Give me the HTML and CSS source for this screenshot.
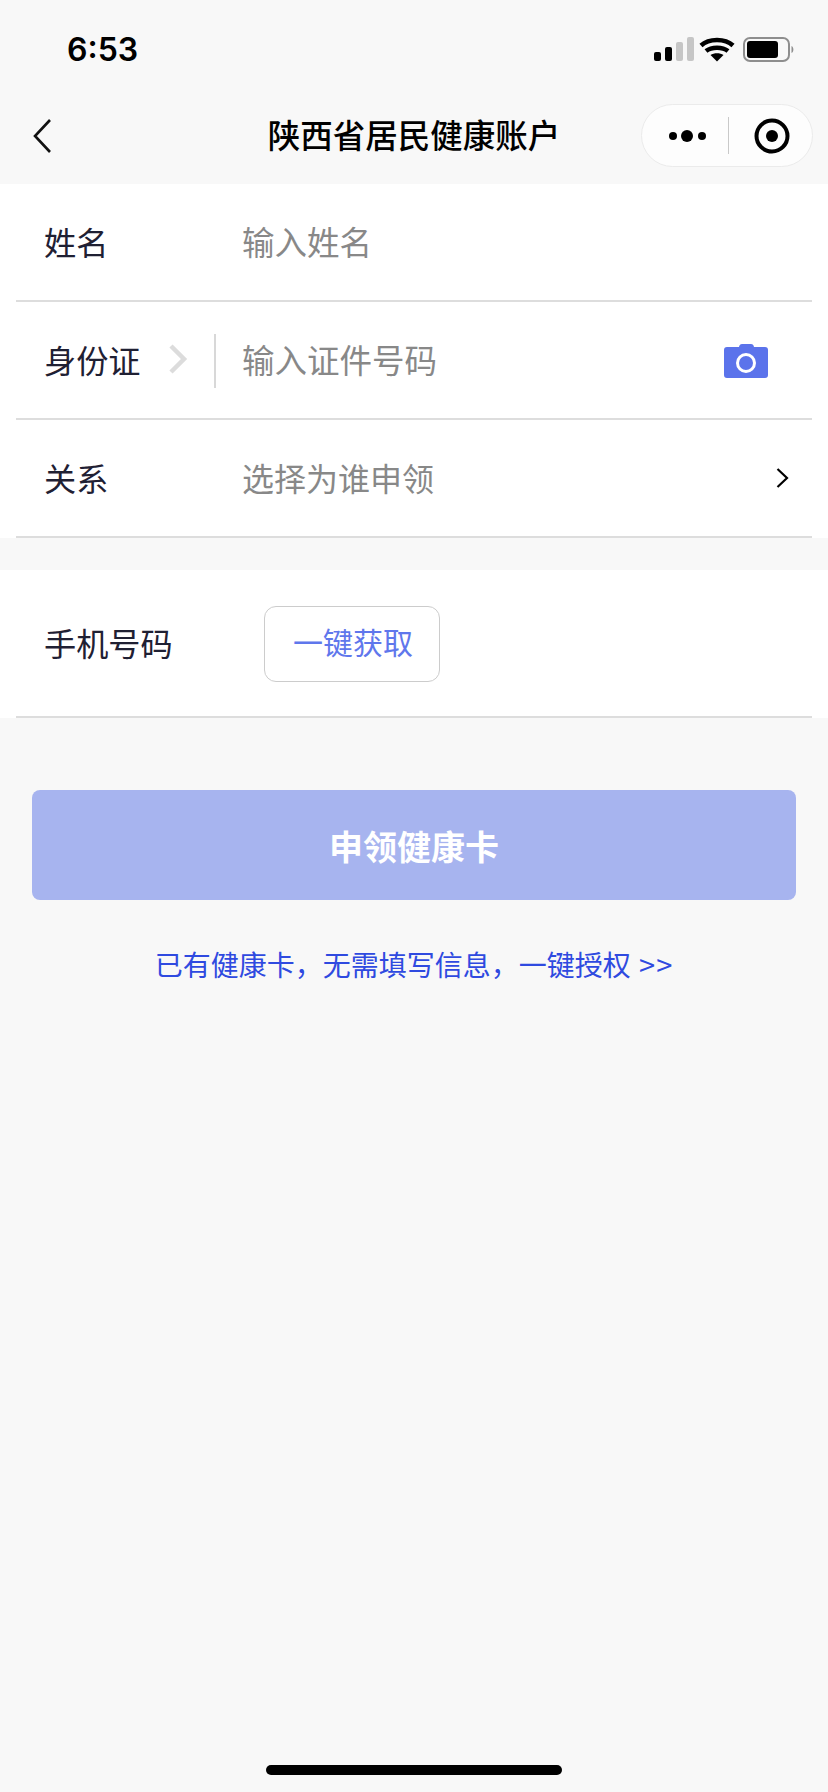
FILE: index.html
```html
<!DOCTYPE html>
<html lang="zh-CN">
    <head>
        <meta charset="utf-8">
        <meta name="viewport" content="width=device-width, initial-scale=1" />
        <title>陕西省居民健康账户</title>
        <link rel="stylesheet" href="styles.css">
    </head>
    <body>
        <div class="status-bar">
            <span class="time">6:53</span>
            <svg class="status-icons" width="142" height="26" viewBox="0 0 142 26">
                <rect x="1" y="15" width="7" height="9" rx="2" fill="#000"/>
                <rect x="12" y="10" width="7" height="14" rx="2" fill="#000"/>
                <rect x="23" y="5" width="7" height="19" rx="2" fill="#c6c6c6"/>
                <rect x="34" y="0" width="7" height="24" rx="2" fill="#c6c6c6"/>
                <path d="M48 8.5 C56 1 72 1 80 8.5 M53 14 C58.500 9.500 69.500 9.500 75 14" fill="none" stroke="#000" stroke-width="4.500"/>
                <path d="M57.500 18 C61 15.500 67 15.500 70.500 18 L64 24.500 Z" fill="#000"/>
                <rect x="91" y="1" width="45" height="23" rx="6" fill="none" stroke="#8e8e8e" stroke-width="2"/>
                <rect x="94" y="4" width="31" height="17" rx="3" fill="#000"/>
                <path d="M138.500 9 C141 10 141 15 138.500 16 Z" fill="#8e8e8e"/>
            </svg>
        </div>
        <div class="nav-bar">
            <svg class="nav-back" width="20" height="36" viewBox="0 0 20 36">
                <path d="M18 2 L3 18 L18 34" fill="none" stroke="#111" stroke-width="2.600"/>
            </svg>
            <span class="nav-title">陕西省居民健康账户</span>
            <div class="capsule">
                <svg class="capsule-more" width="40" height="16" viewBox="0 0 40 16">
                    <circle cx="5" cy="8" r="4" fill="#000"/>
                    <circle cx="19" cy="8" r="6" fill="#000"/>
                    <circle cx="34" cy="8" r="4" fill="#000"/>
                </svg>
                <span class="capsule-line"></span>
                <svg class="capsule-target" width="36" height="36" viewBox="0 0 36 36">
                    <circle cx="18" cy="18" r="15.500" fill="none" stroke="#000" stroke-width="4"/>
                    <circle cx="18" cy="18" r="6" fill="#000"/>
                </svg>
            </div>
        </div>

        <div class="form-group">
            <div class="row">
                <span class="label">姓名</span>
                <span class="hint">输入姓名</span>
            </div>
            <div class="row">
                <div class="label label-type">
                    <span>身份证</span>
                    <svg class="type-arrow" width="20" height="30" viewBox="0 0 20 30">
                        <path d="M3 2 L16 15 L3 28" fill="none" stroke="#dcdcdc" stroke-width="4.500"/>
                    </svg>
                    <span class="type-line"></span>
                </div>
                <span class="hint">输入证件号码</span>
                <svg class="camera" width="44" height="34" viewBox="0 0 44 34">
                    <path d="M15 3 Q15.500 0 18 0 H27 Q29.500 0 30 3 H41 Q44 3 44 6 V31 Q44 34 41 34 H3 Q0 34 0 31 V6 Q0 3 3 3 Z" fill="#5b73eb"/>
                    <circle cx="22" cy="19" r="8.500" fill="none" stroke="#fff" stroke-width="3"/>
                </svg>
            </div>
            <div class="row">
                <span class="label">关系</span>
                <span class="hint hint-small">选择为谁申领</span>
                <svg class="row-arrow" width="13" height="20" viewBox="0 0 13 20">
                    <path d="M1.500 1 L11 10 L1.500 19" fill="none" stroke="#000" stroke-width="2.200"/>
                </svg>
            </div>
        </div>

        <div class="form-group form-group-phone">
            <div class="row row-phone">
                <span class="label label-phone">手机号码</span>
                <span class="get-phone">一键获取</span>
            </div>
        </div>

        <div class="submit">申领健康卡</div>
        <p class="auth-link">已有健康卡，无需填写信息，一键授权 <span class="auth-more">&gt;&gt;</span></p>

        <div class="home-bar"></div>
    </body>
</html>
```

FILE: styles.css
```css
html, body { height: 100%; }
body {
    margin: 0;
    height: 1792px;
    overflow: hidden;
    position: relative;
    background: #f8f8f8;
    color: #1f2033;
    font-family: "Noto Sans CJK SC", "Noto Sans", sans-serif;
}

.status-bar {
    height: 88px;
    display: flex;
    justify-content: space-between;
    align-items: center;
    padding: 0 33px 0 67px;
}
.time {
    font-family: Inter, sans-serif;
    font-size: 32px;
    font-weight: 600;
    color: #000;
    margin-top: 10px;
}
.status-icons { margin-top: 12px; }

.nav-bar {
    height: 96px;
    display: flex;
    align-items: center;
    justify-content: center;
    position: relative;
}
.nav-title {
    font-size: 32.500px;
    font-weight: 500;
    color: #000;
    line-height: 40px;
    margin-top: -4px;
}
.nav-back {
    position: absolute;
    left: 32px;
    top: 30px;
}
.capsule {
    position: absolute;
    left: 641px;
    top: 16px;
    width: 172px;
    height: 63px;
    box-sizing: border-box;
    border: 1px solid #ebebeb;
    border-radius: 32px;
    background: #fdfdfd;
    display: flex;
    align-items: center;
    padding-left: 26px;
}
.capsule-line {
    width: 1px;
    height: 37px;
    background: #c9c9c9;
    margin: 0 25px 0 20px;
}

.form-group {
    background: #fff;
    height: 354px;
}
.form-group-phone {
    height: 148px;
    margin-top: 32px;
}
.row {
    height: 118px;
    box-sizing: border-box;
    margin: 0 16px;
    border-bottom: 2px solid #ddd;
    display: flex;
    align-items: center;
    font-size: 32.200px;
}
.row-phone { height: 148px; }
.label {
    width: 198px;
    padding-left: 28px;
    flex: none;
    margin-top: -3px;
}
.form-group .row > .label { width: 198px; }
.label-type {
    display: flex;
    align-items: center;
}
.type-arrow { margin-left: 27px; }
.type-line {
    width: 2px;
    height: 54px;
    background: #d8d8d8;
    margin: 5px 0 0 26px;
}
.hint {
    color: #888;
    flex: 1;
    font-size: 32.500px;
    margin-top: -3px;
}
.hint-small { font-size: 32px; }
.camera { margin: 1px 44px 0 0; }
.row-arrow { margin-right: 23px; }

.form-group .row > .label-phone { width: 220px; }
.get-phone {
    width: 176px;
    height: 76px;
    box-sizing: border-box;
    border: 1px solid #ccc;
    border-radius: 12px;
    display: flex;
    align-items: center;
    justify-content: center;
    font-size: 30px;
    color: #5f77ec;
    margin-top: 1px;
    padding: 0 0 6px 2px;
}

.submit {
    margin: 72px 32px 0;
    height: 110px;
    border-radius: 8px;
    background: #a7b4ef;
    color: #fff;
    font-size: 34px;
    font-weight: 700;
    display: flex;
    align-items: center;
    justify-content: center;
}
.auth-link {
    margin: 43px 0 0;
    text-align: center;
    font-size: 28px;
    line-height: 40px;
    color: #2f4ae0;
}
.auth-more {
    font-size: 29px;
    letter-spacing: 1px;
    margin-left: 2px;
}

.home-bar {
    position: absolute;
    left: 266px;
    top: 1765px;
    width: 296px;
    height: 10px;
    border-radius: 5px;
    background: #000;
}
```
